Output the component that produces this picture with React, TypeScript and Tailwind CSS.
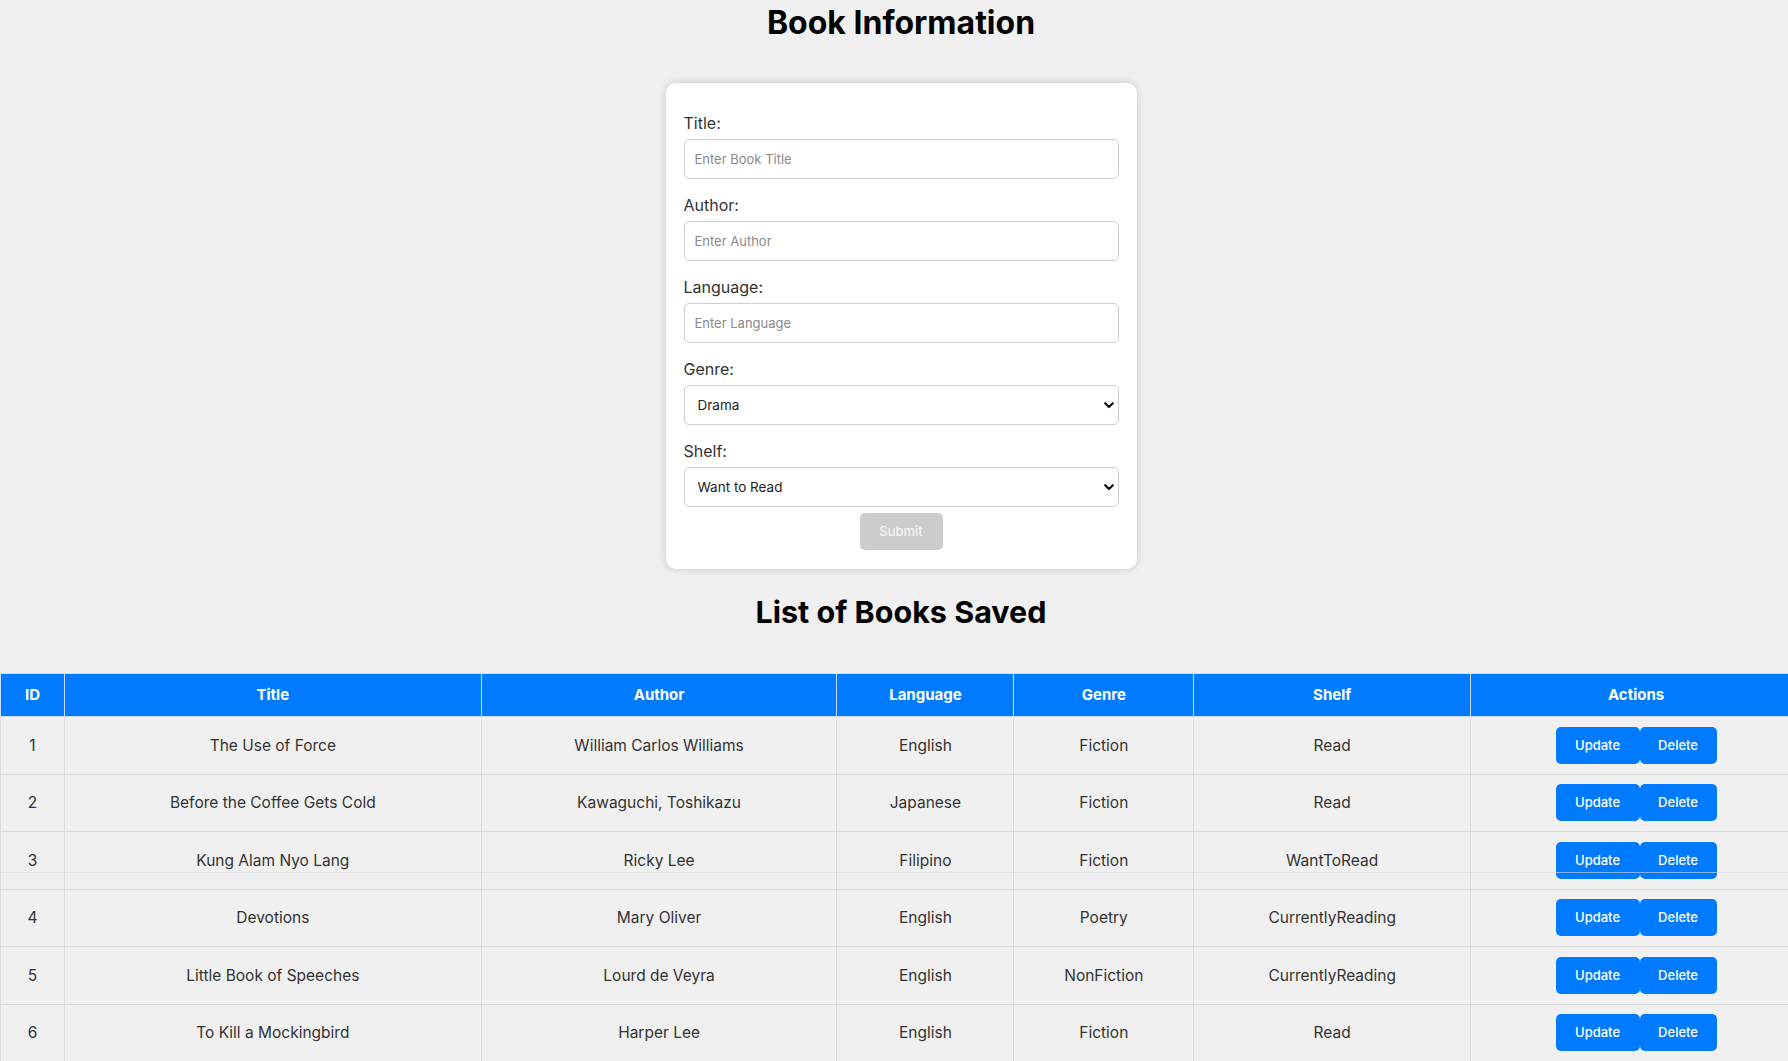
import React from "react";

const books = [
  { id: 1, title: "The Use of Force", author: "William Carlos Williams", language: "English", genre: "Fiction", shelf: "Read" },
  { id: 2, title: "Before the Coffee Gets Cold", author: "Kawaguchi, Toshikazu", language: "Japanese", genre: "Fiction", shelf: "Read" },
  { id: 3, title: "Kung Alam Nyo Lang", author: "Ricky Lee", language: "Filipino", genre: "Fiction", shelf: "WantToRead" },
  { id: 4, title: "Devotions", author: "Mary Oliver", language: "English", genre: "Poetry", shelf: "CurrentlyReading" },
  { id: 5, title: "Little Book of Speeches", author: "Lourd de Veyra", language: "English", genre: "NonFiction", shelf: "CurrentlyReading" },
  { id: 6, title: "To Kill a Mockingbird", author: "Harper Lee", language: "English", genre: "Fiction", shelf: "Read" },
];

function Chevron() {
  return (
    <svg width="10" height="7" viewBox="0 0 10 7" className="shrink-0">
      <path d="M1.2 1.2 L5 5 L8.8 1.2" fill="none" stroke="#111" strokeWidth="2.2" strokeLinecap="round" strokeLinejoin="round" />
    </svg>
  );
}

function Label({ children }: { children: React.ReactNode }) {
  return <div className="mb-[4px] h-[24px] text-[16px] leading-[24px] text-[#333]">{children}</div>;
}

function TextInput({ placeholder }: { placeholder: string }) {
  return (
    <input
      placeholder={placeholder}
      className="block h-[40px] w-full rounded-[5px] border border-[#cfcfcf] bg-white px-[10px] text-[13px] text-[#333] outline-none placeholder:text-[#8a8a8a]"
    />
  );
}

function Select({ value }: { value: string }) {
  return (
    <div className="flex h-[40px] w-full items-center justify-between rounded-[5px] border border-[#cfcfcf] bg-white pl-[13px] pr-[4px]">
      <span className="text-[13.5px] text-[#222]">{value}</span>
      <Chevron />
    </div>
  );
}

export default function App() {
  const cols = ["w-[64px]", "w-[417px]", "w-[356px]", "w-[177px]", "w-[180px]", "w-[277px]", "w-[331px]"];
  const headers = ["ID", "Title", "Author", "Language", "Genre", "Shelf", "Actions"];
  return (
    <div className="min-h-screen w-full overflow-hidden bg-[#f0f0f0] font-['Inter',sans-serif] text-[#222]">
      <div className="w-[1802px]">
        <h1 className="pt-[1px] text-center text-[32px] font-bold leading-[44px] text-black">Book Information</h1>
        <div className="flex justify-center pt-[38px]">
          <div className="w-[471px] rounded-[10px] bg-white px-[18px] pb-[19px] pt-[28px] shadow-[0_0_8px_rgba(0,0,0,0.18)]">
            <div className="mb-[14px]">
              <Label>Title:</Label>
              <TextInput placeholder="Enter Book Title" />
            </div>
            <div className="mb-[14px]">
              <Label>Author:</Label>
              <TextInput placeholder="Enter Author" />
            </div>
            <div className="mb-[14px]">
              <Label>Language:</Label>
              <TextInput placeholder="Enter Language" />
            </div>
            <div className="mb-[14px]">
              <Label>Genre:</Label>
              <Select value="Drama" />
            </div>
            <div>
              <Label>Shelf:</Label>
              <Select value="Want to Read" />
            </div>
            <div className="mt-[6px] flex justify-center">
              <button className="h-[37px] w-[83px] rounded-[5px] bg-[#cccccc] text-[13px] font-medium text-[#f4f4f4]">Submit</button>
            </div>
          </div>
        </div>
        <h2 className="mt-[21px] text-center text-[30.5px] font-bold leading-[44px] text-black">List of Books Saved</h2>
        <div className="relative mt-[39px]">
          <table className="w-full border-collapse text-center">
            <thead>
              <tr className="h-[43px] bg-[#007bff] text-white">
                {headers.map((h, i) => (
                  <th key={h} className={`${cols[i]} border border-[#c9defa] text-[15px] font-bold`}>
                    {h}
                  </th>
                ))}
              </tr>
            </thead>
            <tbody>
              {books.map((b) => (
                <tr key={b.id} className="h-[57.5px] text-[15.5px] text-[#333]">
                  <td className="border border-[#dcdcdc]">{b.id}</td>
                  <td className="border border-[#dcdcdc]">{b.title}</td>
                  <td className="border border-[#dcdcdc]">{b.author}</td>
                  <td className="border border-[#dcdcdc]">{b.language}</td>
                  <td className="border border-[#dcdcdc]">{b.genre}</td>
                  <td className="border border-[#dcdcdc]">{b.shelf}</td>
                  <td className="border border-[#dcdcdc]">
                    <div className="flex justify-center">
                      <button className="h-[37px] w-[84px] rounded-[5px] bg-[#007bff] text-[13px] font-medium text-white">Update</button>
                      <button className="h-[37px] w-[77px] rounded-[5px] bg-[#007bff] text-[13px] font-medium text-white">Delete</button>
                    </div>
                  </td>
                </tr>
              ))}
            </tbody>
          </table>
          <div className="pointer-events-none absolute left-0 right-0 top-[199px] h-px bg-[#d9d9d9]/60" />
        </div>
      </div>
    </div>
  );
}
